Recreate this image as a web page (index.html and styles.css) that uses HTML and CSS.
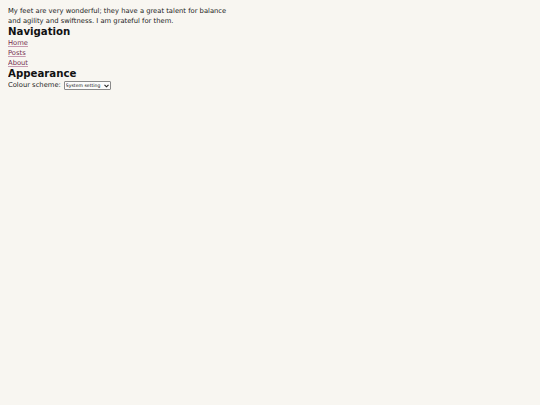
FILE: index.html
```html
<!DOCTYPE html>
<html lang="en">
<head>
<meta charset="utf-8">
<title>Feet</title>
<link rel="stylesheet" href="styles.css">
</head>
<body>
<main class="page">
  <p class="intro">My feet are very wonderful; they have a great talent for balance and agility and swiftness. I am grateful for them.</p>
  <h2 class="heading">Navigation</h2>
  <nav class="nav">
    <a class="nav-link" href="#">Home</a>
    <a class="nav-link" href="#">Posts</a>
    <a class="nav-link" href="#">About</a>
  </nav>
  <h2 class="heading">Appearance</h2>
  <div class="scheme">
    <label class="scheme-label" for="scheme">Colour scheme:</label>
    <span class="select-wrap">
      <select class="scheme-select" id="scheme">
        <option>System setting</option>
        <option>Light</option>
        <option>Dark</option>
      </select>
      <svg class="select-arrow" viewBox="0 0 6 4" width="5" height="4" aria-hidden="true"><path d="M0.6 0.6 L3 3 L5.4 0.6" fill="none" stroke="#222" stroke-width="1.3"/></svg>
    </span>
  </div>
</main>
</body>
</html>
```
FILE: styles.css
```css
html, body {
  background: #f8f6f1;
}
body {
  margin: 6px 8px;
  font-family: "DejaVu Sans", sans-serif;
  font-size: 6.78px;
  line-height: 10px;
  color: #222;
}
.page {
  max-width: 226px;
}
.intro {
  margin: 0;
}
.heading {
  margin: 0;
  font-size: 10.2px;
  line-height: 12px;
  font-weight: bold;
  color: #111;
}
.nav {
  display: flex;
  flex-direction: column;
  align-items: flex-start;
}
.nav-link {
  color: #76304f;
  text-decoration: underline;
  text-decoration-color: #c79bb0;
}
.scheme {
  display: flex;
  align-items: center;
  gap: 3px;
  height: 10px;
}
.select-wrap {
  position: relative;
  display: inline-flex;
  margin-top: 1px;
}
.scheme-select {
  -webkit-appearance: none;
  appearance: none;
  font-family: "DejaVu Sans", sans-serif;
  font-size: 4.6px;
  line-height: 7px;
  width: 47px;
  height: 9px;
  padding: 0 6px 0 1px;
  margin: 0;
  border: 1px solid #8a8a8a;
  border-radius: 1px;
  background: #fbfbfb;
  color: #111;
}
.select-arrow {
  position: absolute;
  right: 2px;
  top: 3px;
  pointer-events: none;
}
```
